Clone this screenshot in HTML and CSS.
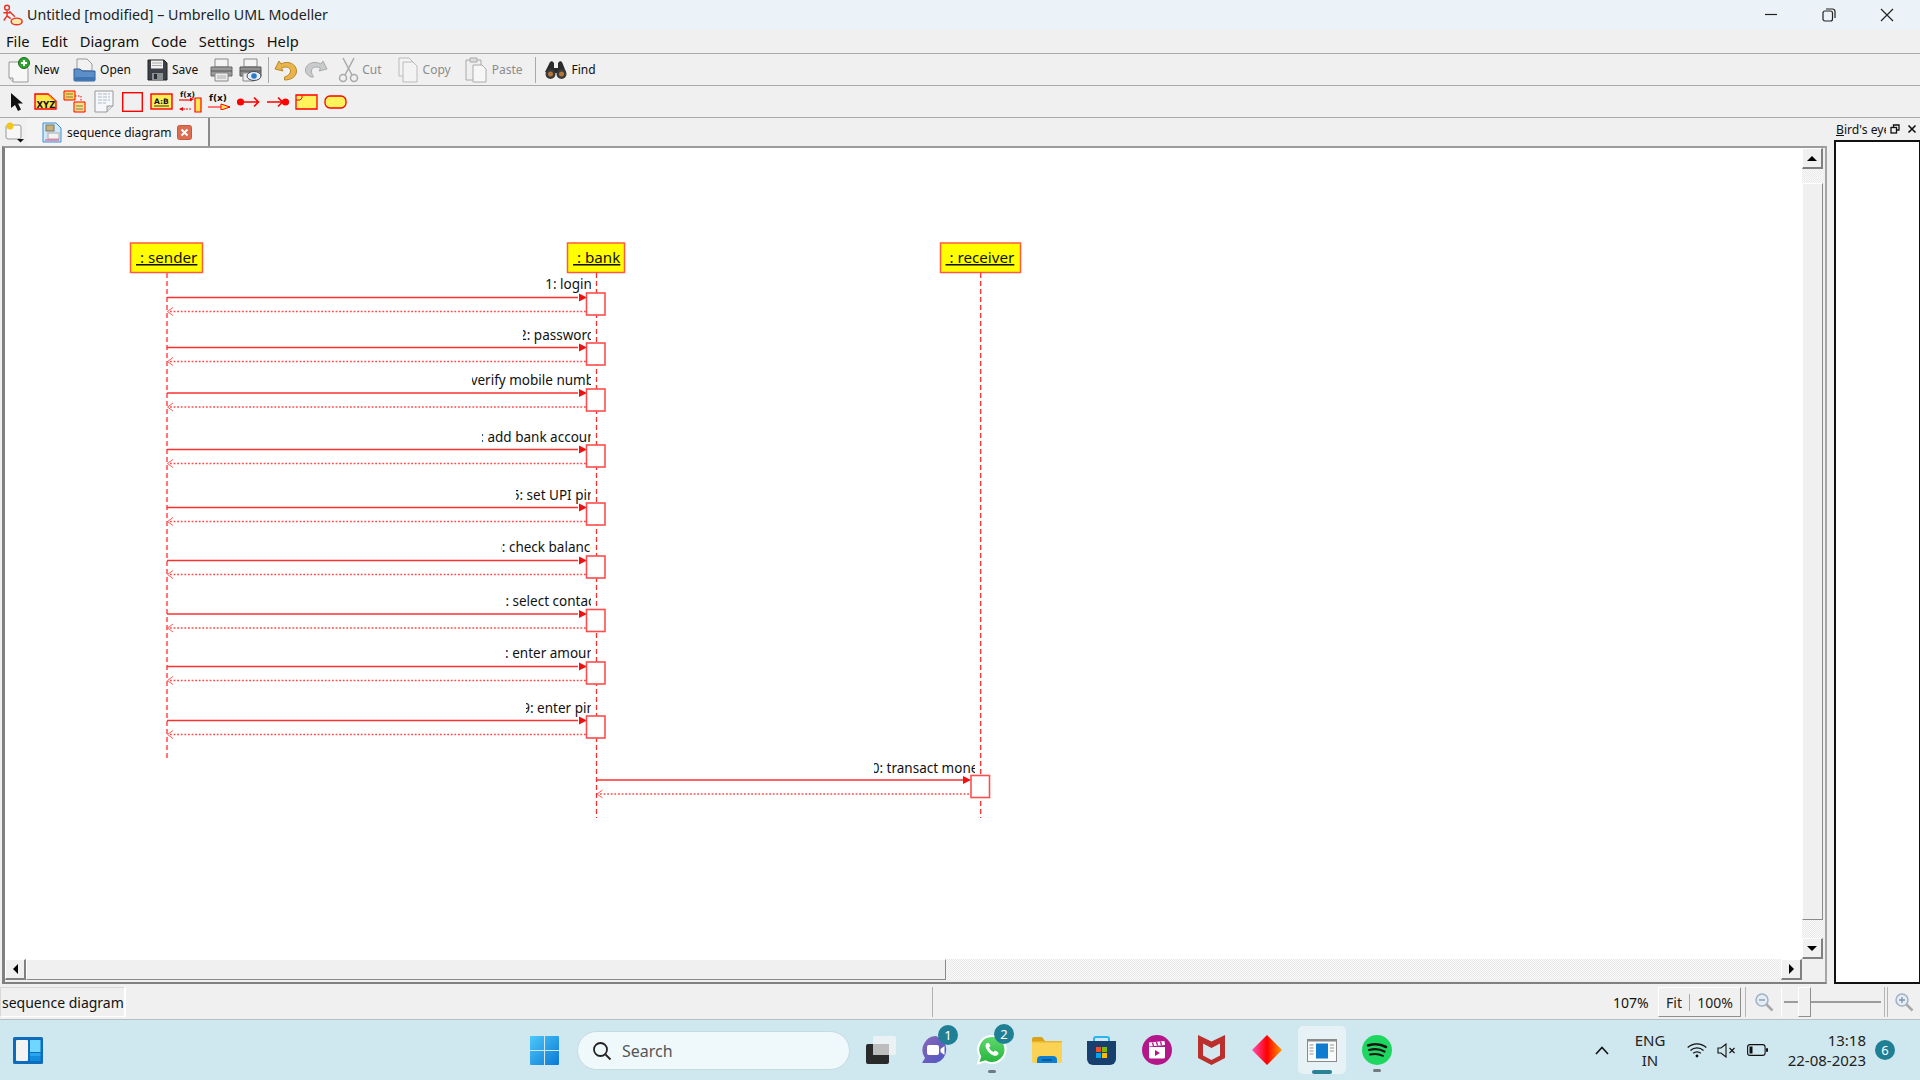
FILE: index.html
```html
<!DOCTYPE html>
<html lang="en">
<head>
  <meta charset="UTF-8" />
  <title>Untitled [modified] – Umbrello UML Modeller</title>
  <link rel="stylesheet" href="styles.css">
</head>
<body>
  <div class="titlebar">
    <svg class="app-icon" width="22" height="24" viewBox="0 0 24 24" fill="none" stroke="#e8332a" stroke-width="1.6">
      <circle cx="5.5" cy="4" r="2.6"/><path d="M5.5 7v6M1.5 9.5h8M5.5 13l-3.5 5M5.5 13l4 3M8 8l6 6"/><ellipse cx="16" cy="19" rx="6" ry="3.6" fill="#ffe9a8"/>
    </svg>
    <span class="title-text">Untitled [modified] – Umbrello UML Modeller</span>
    <div class="win-btns">
      <svg width="14" height="14" viewBox="0 0 14 14" stroke="#222" fill="none" stroke-width="1.2"><path d="M1 6.5h12"/></svg>
      <svg width="14" height="14" viewBox="0 0 14 14" stroke="#222" fill="none" stroke-width="1.2"><rect x="1" y="3" width="9.5" height="10" rx="2"/><path d="M4 1h6.5a2.5 2.5 0 0 1 2.5 2.500v6.500"/></svg>
      <svg width="14" height="14" viewBox="0 0 14 14" stroke="#222" fill="none" stroke-width="1.2"><path d="M1 1l12 12M13 1L1 13"/></svg>
    </div>
  </div>

  <div class="menubar">
    <span>File</span><span>Edit</span><span>Diagram</span><span>Code</span><span>Settings</span><span>Help</span>
  </div>

  <div class="toolbar main-tools">
    <div class="tool t-new">
      <svg width="24" height="26" viewBox="0 0 24 26"><path d="M1 5h13l6 6v14H5l-4-4z" fill="#f7f7f7" stroke="#999"/><path d="M1 21h4v4" fill="#ddd" stroke="#999"/><circle cx="16" cy="6" r="5.500" fill="#2fa52f" stroke="#176b17"/><path d="M16 3v6M13 6h6" stroke="#fff" stroke-width="2"/></svg>
      <span>New</span>
    </div>
    <div class="tool t-open">
      <svg width="24" height="24" viewBox="0 0 24 24"><path d="M4 12V1h10l5 5v7z" fill="#f2f2f2" stroke="#999"/><path d="M1 11h6l2 2h13v9a1 1 0 0 1-1 1H2a1 1 0 0 1-1-1z" fill="#5c8fc9" stroke="#2f5f99"/><path d="M2 19h20v3H2z" fill="#3f74b3"/></svg>
      <span>Open</span>
    </div>
    <div class="tool t-save">
      <svg width="21" height="22" viewBox="0 0 21 22"><path d="M1 1h16l3 3v17H1z" fill="#3d4147" stroke="#222"/><path d="M4 1.500h12v8H4z" fill="#f1f1f1"/><path d="M5 4h10M5 6.500h10" stroke="#aaa"/><path d="M5 14h11v7H5z" fill="#8b8f94"/><path d="M7 15h3v5H7z" fill="#2a2d31"/></svg>
      <span>Save</span>
    </div>
    <div class="tool t-print">
      <svg width="23" height="24" viewBox="0 0 23 24"><path d="M5 1h13v8H5z" fill="#f4f4f4" stroke="#888"/><path d="M1 9h21v9H1z" fill="#9a9a9a" stroke="#666"/><path d="M1 13h21" stroke="#555"/><path d="M5 15h13v8H5z" fill="#eee" stroke="#888"/><path d="M7 18h9M7 20h9" stroke="#aaa"/></svg>
    </div>
    <div class="tool t-preview">
      <svg width="23" height="24" viewBox="0 0 23 24"><path d="M5 1h13v8H5z" fill="#f4f4f4" stroke="#888"/><path d="M1 9h21v9H1z" fill="#8f8f8f" stroke="#555"/><path d="M1 13h21" stroke="#555"/><path d="M4 15h11v8H4z" fill="#eee" stroke="#888"/><ellipse cx="15" cy="18" rx="7" ry="4.500" fill="#e8f0fb" stroke="#445"/><circle cx="15" cy="18" r="2.800" fill="#2b7cc7"/></svg>
    </div>
    <i class="tool-sep s-first"></i>
    <div class="tool t-undo">
      <svg width="23" height="22" viewBox="0 0 23 22"><path d="M5 2l-4 8 8 2-1.500-3c4-2 9-1 9 3 0 3-3 5-6 6v3c6 0 12-3 12-9C22.500 5 14 1 7 5z" fill="#e9b44a" stroke="#b8862b"/></svg>
    </div>
    <div class="tool t-redo">
      <svg width="23" height="22" viewBox="0 0 23 22"><path d="M18 2l4 8-8 2 1.500-3c-4-2-9-1-9 3 0 3 1 4 2 6H6C2 16 .5 14 .5 11 .5 5 9 1 16 5z" fill="#c9cccc" stroke="#aaa"/></svg>
    </div>
    <div class="tool t-cut disabled">
      <svg width="21" height="26" viewBox="0 0 21 26" fill="none" stroke="#a8a8a8" stroke-width="1.500"><path d="M5 1l9 17M16 1L7 18"/><circle cx="5" cy="21" r="3.500"/><circle cx="16" cy="21" r="3.500"/></svg>
      <span>Cut</span>
    </div>
    <div class="tool t-copy disabled">
      <svg width="20" height="26" viewBox="0 0 20 26" fill="#f3f3f3" stroke="#bbb"><path d="M1 1h10l4 4v14H1z"/><path d="M5 5h10l4 4v16H5z"/></svg>
      <span>Copy</span>
    </div>
    <div class="tool t-paste disabled">
      <svg width="22" height="26" viewBox="0 0 22 26" fill="#efefef" stroke="#aaa"><path d="M1 3h15v20H1z"/><path d="M5 1h7v4H5z" fill="#ddd"/><path d="M8 8h9l4 4v13H8z" fill="#f7f7f7"/></svg>
      <span>Paste</span>
    </div>
    <i class="tool-sep s-second"></i>
    <div class="tool t-find">
      <svg width="22" height="20" viewBox="0 0 22 20"><path d="M7 1l2 2v5h4V3l2-2 2 1 4 10-8 1H7l-7-1L5 2z" fill="#2b2b2b"/><circle cx="5.500" cy="14" r="5" fill="#3a3a3a"/><circle cx="16.500" cy="14" r="5" fill="#3a3a3a"/><circle cx="5.500" cy="14" r="2.500" fill="#b5763a"/><circle cx="16.500" cy="14" r="2.500" fill="#b5763a"/></svg>
      <span>Find</span>
    </div>
  </div>

  <div class="toolbar shape-tools">
    <div class="shape"><svg width="14" height="20" viewBox="0 0 14 20"><path d="M1 1v15l4-3 3 6 3-1.500-3-6h5z" fill="#111"/></svg></div>
    <div class="shape"><svg width="23" height="17" viewBox="0 0 23 17"><path d="M1 1h13l8 7v8H1z" fill="#ffe84d" stroke="#f00" stroke-width="1.400"/><path d="M14 1l3 5 5 2" fill="#f5a500"/><text x="2.500" y="15" class="tiny-bold">XYZ</text></svg></div>
    <div class="shape"><svg width="23" height="23" viewBox="0 0 23 23"><path d="M1 1h11v9H1z" fill="#ffd84d" stroke="#f00"/><path d="M12 6h6v6" fill="none" stroke="#f00" stroke-dasharray="1.500 1.500"/><path d="M11 12h11v10H11z" fill="#ffe27a" stroke="#f00"/><path d="M3 4h7M3 7h7M13 16h7M13 19h7" stroke="#776" stroke-width="1.200"/></svg></div>
    <div class="shape"><svg width="20" height="23" viewBox="0 0 20 23"><path d="M1 1h18v15l-6 6H1z" fill="#f6f7fa" stroke="#999"/><path d="M19 16h-6v6" fill="#ddd" stroke="#999"/><path d="M4 4h12M4 7h12M4 10h12M4 13h8" stroke="#abc" stroke-dasharray="4 1"/></svg></div>
    <div class="shape"><svg width="21" height="20" viewBox="0 0 21 20"><rect x=".7" y=".7" width="19.600" height="18.600" fill="none" stroke="#f00" stroke-width="1.400"/></svg></div>
    <div class="shape"><svg width="23" height="17" viewBox="0 0 23 17"><rect x="1" y="1" width="21" height="15" fill="#ffee58" stroke="#f00" stroke-width="1.400"/><text x="4" y="11" class="tiny-bold small">A:B</text><path d="M4 13h15" stroke="#333"/></svg></div>
    <div class="shape"><svg width="23" height="23" viewBox="0 0 23 23"><text x="1" y="7" class="tiny-bold small">f(x)</text><path d="M0 10h13" stroke="#f00" stroke-width="1.200"/><path d="M16 7l-4-1.500v4z" transform="translate(-1 2)" fill="#f00"/><path d="M16 8h6v14h-6z" fill="#ffe84d" stroke="#f00" stroke-width="1.200"/><path d="M1 19h11" stroke="#f00" stroke-dasharray="2 1"/><path d="M0 19l4-2v4z" fill="#f00"/></svg></div>
    <div class="shape"><svg width="23" height="17" viewBox="0 0 23 17"><text x="1" y="8" class="tiny-bold fx">f(x)</text><path d="M0 14h22" stroke="#f00"/><path d="M22 14l-9-3v6z" fill="#ffe84d" stroke="#f00"/></svg></div>
    <div class="shape"><svg width="23" height="12" viewBox="0 0 23 12" fill="none" stroke="#f00" stroke-width="1.600"><circle cx="3.500" cy="6" r="2.800" fill="#f00"/><path d="M3 6h18M17 1.500L21.500 6 17 10.500"/></svg></div>
    <div class="shape"><svg width="23" height="12" viewBox="0 0 23 12" fill="none" stroke="#f00" stroke-width="1.600"><circle cx="19.500" cy="6" r="2.800" fill="#f00"/><path d="M1 6h18M12 1.500L16.500 6 12 10.500"/></svg></div>
    <div class="shape"><svg width="23" height="16" viewBox="0 0 23 16"><path d="M1 1h21v14H1z" fill="#fff25a" stroke="#f00" stroke-width="1.300"/><path d="M1 6h4l2-2V1" fill="none" stroke="#f00"/></svg></div>
    <div class="shape"><svg width="23" height="14" viewBox="0 0 23 14"><rect x="1" y="1" width="21" height="12" rx="5" fill="#fff25a" stroke="#f00" stroke-width="1.300"/></svg></div>
  </div>

  <div class="workspace">
    <div class="doc">
      <div class="tabstrip">
        <div class="new-tab">
          <svg width="20" height="22" viewBox="0 0 20 22"><rect x="1" y="4" width="15" height="14" rx="2" fill="#f7f7f7" stroke="#999"/><circle cx="5" cy="5" r="3.500" fill="#f5c518"/><path d="M12 18h7l-3.500 3.500z" fill="#111"/></svg>
        </div>
        <div class="tab">
          <svg width="20" height="21" viewBox="0 0 20 21"><path d="M1 1h13l5 5v14H1z" fill="#cfe8fa" stroke="#3a8fd0"/><rect x="4" y="3" width="8" height="6" fill="#c9b07a" stroke="#776"/><rect x="6" y="11" width="11" height="6" fill="#f3f3f3" stroke="#aaa"/><path d="M3 18h14" stroke="#e58" stroke-width="1.200"/></svg>
          <span>sequence diagram</span>
          <svg class="tab-close" width="15" height="15" viewBox="0 0 15 15"><rect x=".5" y=".5" width="14" height="14" rx="2" fill="#dc6d50" stroke="#c9583c"/><path d="M4.500 4.500l6 6M10.500 4.500l-6 6" stroke="#fff" stroke-width="2"/></svg>
        </div>
      </div>

      <div class="frame">
        <div class="canvas">
          <svg class="diagram" width="1797" height="811" viewBox="5 148 1797 811">
            <defs>
              <g id="call">
                <path class="msg-line" d="M167 0H578"/><path class="arrow" d="M587 0l-8-4v8z"/>
                <path class="ret-line" d="M170 14H586"/><path class="ret-arrow" d="M173 10l-5.500 4 5.500 4"/>
              </g>
            </defs>

            <path class="lifeline" d="M167 273V759"/>
            <path class="lifeline" d="M596.500 273V818"/>
            <path class="lifeline" d="M980.700 273V818"/>

            <rect class="obj" x="130.500" y="243" width="72" height="29.500"/>
            <text class="obj-name" x="136" y="263">&nbsp;: sender</text>
            <rect class="obj" x="567.500" y="243" width="57" height="29.500"/>
            <text class="obj-name" x="573" y="263">&nbsp;: bank</text>
            <rect class="obj" x="940.500" y="243" width="80" height="29.500"/>
            <text class="obj-name" x="945.500" y="263">&nbsp;: receiver</text>

            <use href="#call" y="297.500"/>
            <use href="#call" y="347.500"/>
            <use href="#call" y="393"/>
            <use href="#call" y="449.500"/>
            <use href="#call" y="507.500"/>
            <use href="#call" y="560.500"/>
            <use href="#call" y="614"/>
            <use href="#call" y="666.500"/>
            <use href="#call" y="720.500"/>

            <rect class="act" x="586.500" y="293" width="18.500" height="22"/>
            <rect class="act" x="586.500" y="343" width="18.500" height="22"/>
            <rect class="act" x="586.500" y="389" width="18.500" height="22"/>
            <rect class="act" x="586.500" y="445" width="18.500" height="22"/>
            <rect class="act" x="586.500" y="503" width="18.500" height="22"/>
            <rect class="act" x="586.500" y="556" width="18.500" height="22"/>
            <rect class="act" x="586.500" y="609.500" width="18.500" height="22"/>
            <rect class="act" x="586.500" y="662" width="18.500" height="22"/>
            <rect class="act" x="586.500" y="716" width="18.500" height="22"/>

            <path class="msg-line" d="M596.500 780H963"/><path class="arrow" d="M971 780l-8-4v8z"/>
            <path class="ret-line" d="M600 794H970"/><path class="ret-arrow" d="M602.500 790l-5.500 4 5.500 4"/>
            <rect class="act" x="971" y="775.500" width="18.500" height="22"/>
          </svg>

          <div class="msg m1"><span>1: login</span></div>
          <div class="msg m2"><span>2: password</span></div>
          <div class="msg m3"><span>3: verify mobile number</span></div>
          <div class="msg m4"><span>4: add bank account</span></div>
          <div class="msg m5"><span>5: set UPI pin</span></div>
          <div class="msg m6"><span>6: check balance</span></div>
          <div class="msg m7"><span>7: select contact</span></div>
          <div class="msg m8"><span>8: enter amount</span></div>
          <div class="msg m9"><span>9: enter pin</span></div>
          <div class="msg m10"><span>10: transact money</span></div>
        </div>

        <div class="vscroll">
          <div class="sb-btn"><i class="tri up"></i></div>
          <div class="sb-track v-top"></div>
          <div class="sb-thumb"></div>
          <div class="sb-track v-bot"></div>
          <div class="sb-btn"><i class="tri down"></i></div>
        </div>
        <div class="hscroll">
          <div class="sb-btn"><i class="tri left"></i></div>
          <div class="sb-thumb h-thumb"></div>
          <div class="sb-track"></div>
          <div class="sb-btn"><i class="tri right"></i></div>
        </div>
        <div class="corner"></div>
      </div>
    </div>

    <div class="splitter"></div>

    <div class="birdseye">
      <div class="bird-title">
        <span class="bird-label"><u>B</u>ird's eye view</span>
        <svg width="10" height="10" viewBox="0 0 10 10" fill="none" stroke="#111" stroke-width="1.300"><rect x="1" y="3.500" width="5.500" height="5.500"/><path d="M3.500 3V1h5.500v5H7"/></svg>
        <svg class="bird-close" width="10" height="10" viewBox="0 0 10 10" fill="none" stroke="#111" stroke-width="1.600"><path d="M1.500 1.500l7 7M8.500 1.500l-7 7"/></svg>
      </div>
      <div class="bird-view"></div>
    </div>
  </div>

  <div class="statusbar">
    <div class="status-name">sequence diagram</div>
    <div class="status-gap"></div>
    <div class="status-zoom">
      <span class="pct">107%</span>
      <div class="fit-group"><span>Fit</span><i></i><span>100%</span></div>
      <div class="zoom-btn">
        <svg width="20" height="20" viewBox="0 0 20 20" fill="none"><circle cx="8" cy="8" r="6" fill="#e4edf5" stroke="#9fb1c2" stroke-width="1.500"/><path d="M5 8h6" stroke="#7f93a6" stroke-width="1.300"/><path d="M12.500 12.500l6 6" stroke="#a9a9a9" stroke-width="2.500"/></svg>
      </div>
      <div class="zoom-slider"><div class="slider-thumb"></div></div>
      <div class="zoom-btn">
        <svg width="20" height="20" viewBox="0 0 20 20" fill="none"><circle cx="8" cy="8" r="6" fill="#e4edf5" stroke="#9fb1c2" stroke-width="1.500"/><path d="M5 8h6M8 5v6" stroke="#7f93a6" stroke-width="1.300"/><path d="M12.500 12.500l6 6" stroke="#a9a9a9" stroke-width="2.500"/></svg>
      </div>
    </div>
  </div>

  <div class="taskbar">
    <svg class="tb widgets" width="30" height="27" viewBox="0 0 30 27"><rect width="30" height="27" rx="1.500" fill="#0f6cbd"/><rect x="3" y="3" width="12" height="21" rx="1" fill="#f3f3f3"/><rect x="17" y="3" width="10.500" height="12" fill="#6fd6ff"/><rect x="17" y="16" width="10.500" height="3.500" fill="#26a6f0"/><rect x="17" y="20" width="10.500" height="4" fill="#0f8ee0"/></svg>

    <svg class="tb start" width="29" height="29" viewBox="0 0 29 29"><defs><linearGradient id="wing" x1="0" y1="0" x2="1" y2="1"><stop offset="0" stop-color="#4cc9fb"/><stop offset="1" stop-color="#0a78d4"/></linearGradient></defs><path d="M0 1a1 1 0 0 1 1-1h13v14H0zM15 0h13a1 1 0 0 1 1 1v13H15zM0 15h14v14H1a1 1 0 0 1-1-1zM15 15h14v13a1 1 0 0 1-1 1H15z" fill="url(#wing)"/></svg>

    <div class="tb searchbox">
      <svg width="20" height="20" viewBox="0 0 20 20" fill="none" stroke="#222" stroke-width="1.800"><circle cx="8.500" cy="8.500" r="6.500"/><path d="M13.500 13.500l5 5"/></svg>
      <span>Search</span>
    </div>

    <svg class="tb taskview" width="30" height="28" viewBox="0 0 30 28"><rect y="8" width="23" height="20" rx="2" fill="#2a2a2a"/><rect x="7" y="0" width="23" height="19" rx="2" fill="#f0f3f4" fill-opacity=".85"/><rect x="7" y="8" width="16" height="11" fill="#bdbdbd"/></svg>

    <div class="tb app teams">
      <svg width="30" height="29" viewBox="0 0 30 29"><defs><linearGradient id="mt" x1="0" y1="0" x2="1" y2="1"><stop offset="0" stop-color="#8a67b8"/><stop offset="1" stop-color="#4d57c4"/></linearGradient></defs><path d="M15 0a14 14 0 0 1 0 27H1l3-5A14 14 0 0 1 15 0z" fill="url(#mt)"/><rect x="6" y="9" width="12" height="10" rx="2" fill="#fff"/><path d="M19.500 13l4-3v9l-4-3z" fill="#fff"/></svg>
      <b class="badge">1</b>
    </div>

    <div class="tb app whatsapp">
      <svg width="30" height="30" viewBox="0 0 30 30"><defs><linearGradient id="wa" x1="0" y1="0" x2="0" y2="1"><stop offset="0" stop-color="#5fdb6d"/><stop offset="1" stop-color="#25b23d"/></linearGradient></defs><path d="M15 1a13.500 13.500 0 0 1 0 27c-2.500 0-4.500-.6-6.500-1.700L1 28.500l2.200-7A13.500 13.500 0 0 1 15 1z" fill="url(#wa)" stroke="#fff" stroke-width="2"/><path d="M10 8c-1.500 1-2 3-1 5 1.500 3.500 4 6 7.500 7.500 2 .8 4 0 5-1.500l-.5-2-3-1.500-1.500 1.500c-2-1-3.500-2.500-4.500-4.500L13.500 11 12 8z" fill="#fff"/></svg>
      <b class="badge">2</b>
      <i class="run-dot"></i>
    </div>

    <svg class="tb folder" width="30" height="26" viewBox="0 0 30 26"><path d="M0 2a2 2 0 0 1 2-2h8l3 4H0z" fill="#d9a218"/><path d="M0 4h30v20a2 2 0 0 1-2 2H2a2 2 0 0 1-2-2z" fill="#fbd354"/><path d="M0 4h30v1.500H0z" fill="#e9b52c"/><path d="M5 26v-3a4 4 0 0 1 4-4h12a4 4 0 0 1 4 4v3z" fill="#0e7fd0"/><path d="M10 23h10" stroke="#074f8a" stroke-width="1.500"/></svg>

    <svg class="tb store" width="29" height="29" viewBox="0 0 29 29"><path d="M7 6V3a2 2 0 0 1 2-2h11a2 2 0 0 1 2 2v3" fill="none" stroke="#2cb4ec" stroke-width="2"/><path d="M0 5h29v18a6 6 0 0 1-6 6H6a6 6 0 0 1-6-6z" fill="#17406f"/><rect x="9" y="11" width="5" height="5" fill="#f25022"/><rect x="15" y="11" width="5" height="5" fill="#7fba00"/><rect x="9" y="17" width="5" height="5" fill="#00a4ef"/><rect x="15" y="17" width="5" height="5" fill="#ffb900"/></svg>

    <svg class="tb clipchamp" width="30" height="30" viewBox="0 0 30 30"><circle cx="15" cy="15" r="15" fill="#b4178a"/><path d="M7 12h16v10a1.500 1.500 0 0 1-1.500 1.500h-13A1.500 1.500 0 0 1 7 22z" fill="#fff"/><path d="M7 7.500l15.500-1.500.5 4-16 1.500z" fill="#fff"/><path d="M10.500 7.500l1 3.500M14.500 7l1 3.500M18.500 6.500l1 3.500" stroke="#b4178a" stroke-width="1.300"/><path d="M13 15v6l5-3z" fill="#b4178a"/></svg>

    <svg class="tb mcafee" width="27" height="30" viewBox="0 0 27 30"><path d="M0 0l13.500 6.500L27 0v23l-13.500 7L0 23z" fill="#bb2f2c"/><path d="M5 8.500l8.500 4.500L22 8.500v12l-8.500 4.500L5 20.500z" fill="#d3e8ee"/></svg>

    <svg class="tb diamond" width="30" height="30" viewBox="0 0 30 30"><defs><linearGradient id="dm" x1="0" y1="0" x2="1" y2="0"><stop offset="0" stop-color="#ff4fb8"/><stop offset=".5" stop-color="#ff0000"/><stop offset="1" stop-color="#ff9a00"/></linearGradient></defs><path d="M15 0l15 15-15 15L0 15z" fill="url(#dm)"/></svg>

    <div class="tb active-app">
      <svg width="30" height="23" viewBox="0 0 30 23"><rect x=".5" y=".5" width="29" height="22" fill="#f7f9fa" stroke="#8a8a8a"/><rect x="0" y="0" width="30" height="2.500" fill="#8a8a8a"/><rect x="9" y="4.500" width="12" height="15" fill="#0f7cd0"/><path d="M2.500 6h4M2.500 9h4M2.500 12h4M2.500 15h4M23 6h4M23 9h4M23 12h4" stroke="#b8b8b8" stroke-width="1.500"/></svg>
      <i class="run-bar"></i>
    </div>

    <div class="tb app spotify">
      <svg width="30" height="30" viewBox="0 0 30 30" fill="none" stroke="#191414" stroke-linecap="round"><circle cx="15" cy="15" r="15" fill="#1ed760" stroke="none"/><path d="M6 10.500c6-1.800 13-1.300 18 1.500" stroke-width="2.600"/><path d="M7 15c5-1.400 11-1 15.500 1.500" stroke-width="2.200"/><path d="M8 19.500c4.500-1 9-.7 13 1.300" stroke-width="1.900"/></svg>
      <i class="run-dot"></i>
    </div>

    <div class="tray">
      <svg class="chevron" width="14" height="9" viewBox="0 0 14 9" fill="none" stroke="#111" stroke-width="1.600"><path d="M1 8l6-6.500L13 8"/></svg>
      <div class="lang"><span>ENG</span><span>IN</span></div>
      <svg class="wifi" width="20" height="16" viewBox="0 0 20 16" fill="none" stroke="#111" stroke-width="1.200"><path d="M.7 5.500a13.500 13.500 0 0 1 18.600 0M3.500 8.500a9.500 9.500 0 0 1 13 0M6.200 11.300a5.500 5.500 0 0 1 7.600 0"/><circle cx="10" cy="14" r="1.400" fill="#111" stroke="none"/></svg>
      <svg class="volume" width="19" height="15" viewBox="0 0 19 15" fill="none" stroke="#111" stroke-width="1.100"><path d="M1 5h3l5-4v13l-5-4H1z"/><path d="M12.500 5l5 5M17.500 5l-5 5"/></svg>
      <svg class="battery" width="21" height="12" viewBox="0 0 21 12" fill="none" stroke="#111" stroke-width="1.100"><rect x=".6" y=".6" width="17.500" height="10.800" rx="2.500"/><rect x="2.500" y="2.500" width="3" height="7" fill="#111" stroke="none"/><rect x="19" y="4" width="2" height="4" rx="1" fill="#111" stroke="none"/></svg>
      <div class="clock"><span>13:18</span><span>22-08-2023</span></div>
      <b class="badge notif">6</b>
    </div>
  </div>
</body>
</html>
```

FILE: styles.css
```css
* { box-sizing: border-box; }
html, body { margin: 0; padding: 0; }
body { width: 1920px; height: 1080px; overflow: hidden; display: flex; flex-direction: column; background: #f0f0f0; color: #111; font-family: "Noto Sans", "Open Sans", sans-serif; }
svg { display: block; flex: none; }

/* window chrome */
.titlebar { height: 29px; background: #ebf3f8; display: flex; align-items: center; position: relative; }
.app-icon { margin: 0 3px 0 2px; }
.title-text { font-size: 14.250px; color: #222; }
.win-btns { margin-left: auto; display: flex; gap: 44px; padding-right: 26px; }
.menubar { height: 25px; display: flex; align-items: center; padding-left: 6px; gap: 12px; font-size: 14.700px; border-bottom: 1px solid #a9a9a9; }

.toolbar { height: 32px; display: flex; align-items: center; border-bottom: 1px solid #a9a9a9; }
.tool { display: flex; align-items: center; gap: 3px; font-size: 12px; flex: none; }
.tool.disabled { color: #8c8c8c; gap: 5px; }
.t-new { margin-left: 8px; gap: 2px; }
.t-open { margin-left: 14px; }
.t-save { margin-left: 16px; gap: 4px; }
.t-print { margin-left: 12px; }
.t-preview { margin-left: 6px; }
.tool-sep { width: 1px; height: 26px; background: #a9a9a9; flex: none; }
.s-first { margin: 0 5px 0 6px; }
.t-redo { margin-left: 8px; }
.tool.t-cut { margin-left: 10px; gap: 3px; }
.t-copy { margin-left: 16px; }
.t-paste { margin-left: 14px; }
.s-second { margin-left: 12px; }
.t-find { margin-left: 9px; gap: 5px; }
.shape-tools { padding-left: 2px; }
.shape { width: 29px; display: flex; justify-content: center; flex: none; }
.tiny-bold { font-family: "DejaVu Sans", sans-serif; font-size: 8.500px; font-weight: 700; fill: #111; }
.tiny-bold.small { font-size: 7.500px; }
.tiny-bold.fx { font-size: 9px; }

/* central area */
.workspace { height: 867px; display: flex; }
.doc { width: 1827px; display: flex; flex-direction: column; }
.tabstrip { height: 28px; display: flex; }
.new-tab { width: 27px; padding: 3px 0 0 5px; }
.tab { width: 183px; display: flex; align-items: center; padding-left: 15px; font-size: 12px; background: #f4f4f4; border-right: 2px solid #8a8a8a; }
.tab span { margin-left: 5px; white-space: nowrap; }
.tab-close { margin-left: 6px; }
.frame { flex: none; width: 1825px; height: 838px; margin-left: 2px; border: 2px solid #808080; border-left-width: 3px; border-top-color: #9c9c9c; border-right-color: #a4a4a4; display: grid; grid-template-columns: 1797px 1fr; grid-template-rows: 811px 1fr; background: #f0f0f0; }
.canvas { position: relative; background: #fff; overflow: hidden; }
.diagram { position: absolute; left: 0; top: 0; }

.lifeline { stroke: #ff2e2e; stroke-width: 1.300; stroke-dasharray: 5 3; fill: none; }
.msg-line { stroke: #ff3030; stroke-width: 1.500; fill: none; }
.arrow { fill: #f01010; }
.ret-line { stroke: #ff4a4a; stroke-width: 1.300; stroke-dasharray: 1.800 1.800; fill: none; }
.ret-arrow { stroke: #ff5a5a; stroke-width: 1; fill: none; }
.obj { fill: #ffff00; stroke: #ff5a3c; stroke-width: 1.500; }
.obj-name { font-family: "Noto Sans", sans-serif; font-size: 15.200px; fill: #111; text-decoration: underline; }
.act { fill: #fff; stroke: #ff4d4d; stroke-width: 1.600; }

/* message labels are clipped by their box on both sides, as the app draws them */
.msg { position: absolute; height: 20px; display: flex; justify-content: center; align-items: center; overflow: hidden; white-space: nowrap; font-size: 13.500px; color: #111; }
.msg span { flex: none; }
.m1 { left: 541px; width: 45px; top: 126px; }
.m2 { left: 518px; width: 68px; top: 177px; }
.m3 { left: 467px; width: 119px; top: 222px; }
.m4 { left: 477px; width: 109px; top: 279px; }
.m5 { left: 511px; width: 75px; top: 337px; }
.m6 { left: 496px; width: 90px; top: 389px; }
.m7 { left: 501px; width: 85px; top: 443px; }
.m8 { left: 501px; width: 85px; top: 495px; }
.m9 { left: 521px; width: 65px; top: 550px; }
.m10 { left: 869px; width: 101px; top: 610px; }

/* scroll bars */
.vscroll { display: flex; flex-direction: column; width: 21px; }
.hscroll { display: flex; height: 21px; }
.sb-btn { width: 21px; height: 21px; flex: none; background: #f0f0f0; border: 2px solid; border-color: #fff #808080 #808080 #fff; border-top-width: 1px; border-left-width: 1px; display: flex; align-items: center; justify-content: center; }
.sb-thumb { background: #f0f0f0; border: 1px solid; border-color: #fff #8a8a8a #8a8a8a #fff; flex: 1; }
.vscroll .sb-thumb { flex: none; height: 737px; }
.hscroll .h-thumb { flex: none; width: 920px; }
.sb-track { flex: 1; background-color: #f4f4f4; background-image: repeating-conic-gradient(#e8e8e8 0 25%, #fbfbfb 0 50%); background-size: 2px 2px; }
.v-top { flex: none; height: 14px; }
.tri { width: 0; height: 0; display: block; border-style: solid; border-color: transparent; }
.tri.up { border-width: 0 5px 5px; border-bottom-color: #000; }
.tri.down { border-width: 5px 5px 0; border-top-color: #000; }
.tri.left { border-width: 5px 5px 5px 0; border-right-color: #000; }
.tri.right { border-width: 5px 0 5px 5px; border-left-color: #000; }

.splitter { width: 7px; }
.birdseye { width: 86px; display: flex; flex-direction: column; }
.bird-title { height: 22px; display: flex; align-items: center; gap: 4px; padding: 0 2px; }
.bird-label { width: 50px; overflow: hidden; white-space: nowrap; font-size: 12.200px; }
.bird-close { margin-left: 3px; }
.bird-view { width: 86px; height: 844px; background: #fff; border: 2px solid #111; border-right-width: 1px; }

/* status bar */
.statusbar { height: 35px; padding-top: 2px; padding-bottom: 2px; display: flex; font-size: 14px; border-bottom: 1px solid #b4c0c6; }
.status-name { width: 125px; border: 1px solid; border-color: #d8d8d8 #fff #fff #d8d8d8; display: flex; align-items: center; padding: 1px 0 0 1px; white-space: nowrap; }
.status-gap { width: 809px; border-right: 1px solid #b0b0b0; border-left: 1px solid #fff; }
.status-zoom { flex: 1; display: flex; align-items: stretch; }
.pct { margin-left: 680px; width: 45px; font-size: 14px; display: flex; align-items: center; }
.fit-group { width: 83px; background: #f0f0f0; border: 1px solid; border-color: #fff #8f8f8f #8f8f8f #fff; display: flex; align-items: center; justify-content: space-evenly; color: #222; }
.fit-group i { width: 1px; height: 17px; background: #a9a9a9; }
.zoom-btn { width: 37px; display: flex; align-items: center; justify-content: center; margin-left: 4px; border-left: 1px solid #b5b5b5; border-right: 1px solid #fff; flex: none; }
.zoom-btn:last-child { margin-left: 2px; border-right: 0; width: 33px; }
.zoom-slider { width: 103px; position: relative; border-right: 1px solid #b5b5b5; margin-left: 0; }
.zoom-slider::before { content: ""; position: absolute; left: 2px; right: 3px; top: 14px; height: 2px; background: #9c9c9c; }
.slider-thumb { position: absolute; left: 16px; top: 0; bottom: 0; width: 13px; background: #f0f0f0; border: 1px solid; border-color: #fff #8f8f8f #8f8f8f #fff; }

/* taskbar */
.taskbar { height: 60px; background: #cfe7ee; display: flex; align-items: center; flex: none; }
.tb { flex: none; }
.widgets { margin-left: 13px; }
.start { margin-left: 487px; }
.searchbox { margin-left: 18px; width: 273px; height: 39px; border-radius: 20px; background: #eff8fb; border: 1px solid #c5dbe2; display: flex; align-items: center; padding: 1px 0 0 14px; gap: 10px; color: #555; font-size: 16px; }
.taskview { margin-left: 16px; }
.app { position: relative; }
.teams { margin-left: 25px; }
.whatsapp { margin-left: 26px; }
.folder { margin-left: 25px; }
.store { margin-left: 25px; }
.clipchamp { margin-left: 26px; }
.mcafee { margin-left: 26px; }
.diamond { margin-left: 27px; }
.active-app { margin-left: 16px; width: 48px; height: 48px; background: #e6f2f6; border-radius: 5px; position: relative; display: flex; align-items: center; justify-content: center; }
.spotify { margin-left: 16px; }
.badge { position: absolute; top: -11px; right: -7px; width: 20px; height: 20px; border-radius: 50%; background: #1f7f95; color: #fff; font-weight: 400; font-size: 13px; display: flex; align-items: center; justify-content: center; }
.run-dot { position: absolute; left: 11px; bottom: -7px; width: 8px; height: 3px; border-radius: 2px; background: #6f7b80; }
.whatsapp .run-dot { bottom: -8px; }
.run-bar { position: absolute; left: 14px; bottom: 0; width: 20px; height: 4px; border-radius: 2px; background: #2a8296; }
.tray { margin-left: auto; display: flex; align-items: center; padding-right: 25px; font-size: 15px; color: #222; }
.lang { width: 40px; margin-left: 21px; display: flex; flex-direction: column; align-items: center; line-height: 20px; }
.wifi { margin-left: 17px; }
.volume { margin-left: 10px; }
.battery { margin-left: 11px; }
.clock { width: 90px; margin-left: 8px; display: flex; flex-direction: column; align-items: flex-end; line-height: 20px; white-space: nowrap; }
.badge.notif { position: static; margin-left: 9px; }
```
